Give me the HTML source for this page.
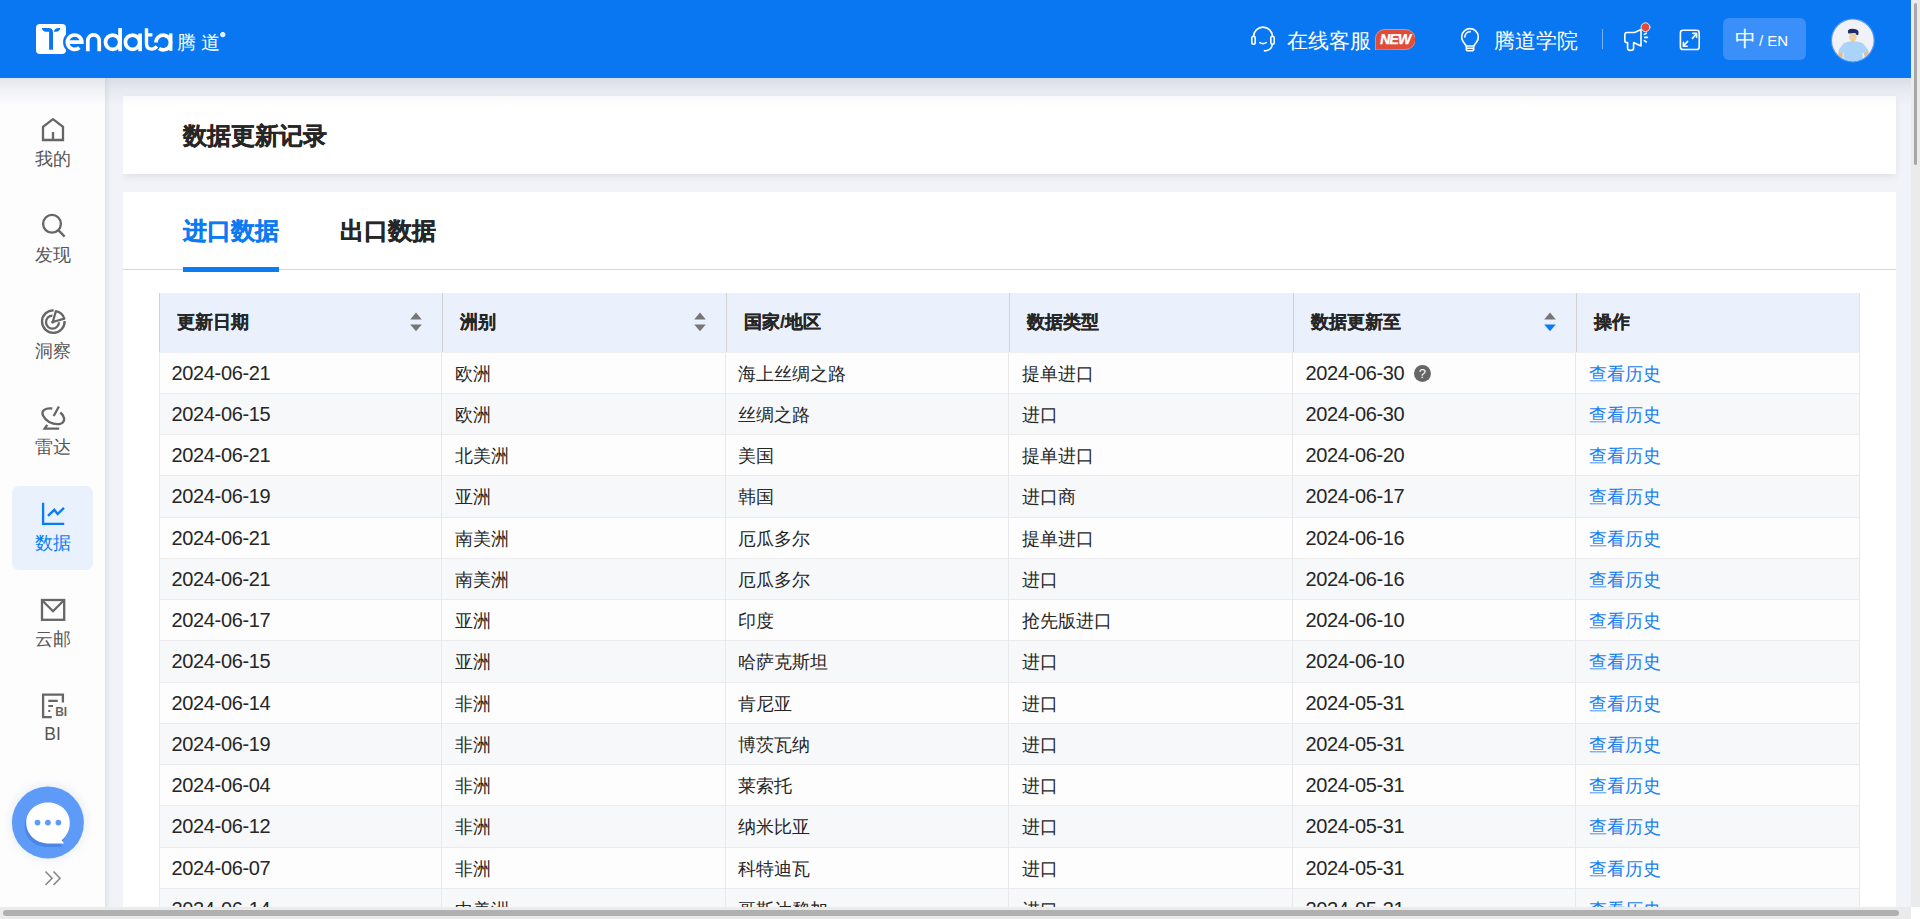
<!DOCTYPE html>
<html><head><meta charset="utf-8">
<style>
*{box-sizing:border-box;margin:0;padding:0}
html,body{width:1920px;height:919px;overflow:hidden;background:#f2f3f8;font-family:"Liberation Sans",sans-serif;color:#333}
.abs{position:absolute}
#hdr{position:absolute;left:0;top:0;width:1911px;height:78px;background:#0977f1;z-index:5}
#hshadow{position:absolute;left:0;top:78px;width:1911px;height:28px;background:linear-gradient(rgba(160,170,190,0.30),rgba(160,170,190,0.14) 40%,rgba(160,170,190,0));z-index:4}
#side{position:absolute;left:0;top:78px;width:105px;height:829px;background:#fdfdfe;z-index:2}
#sshadow{position:absolute;left:105px;top:78px;width:18px;height:829px;background:linear-gradient(90deg,#dfe2ea 0,#e9ebf1 2.5px,#eff1f6 5px,#f2f3f8 9px,#f2f3f8);z-index:1}
.nlab{position:absolute;left:0;width:105px;text-align:center;color:#555;font-size:17.5px;line-height:24px}
.nav{position:absolute;left:0;width:105px;text-align:center;color:#555;font-size:18px}
.nav svg{position:absolute}
.nav span{position:absolute;left:0;width:105px;text-align:center;line-height:20px}
#card1{position:absolute;left:123px;top:96px;width:1773px;height:78px;background:#fff;box-shadow:0 3px 7px rgba(30,40,80,0.08)}
#card2{position:absolute;left:123px;top:192px;width:1773px;height:760px;background:#fff}
.title{position:absolute;left:60px;top:22px;font-size:24px;font-weight:bold;color:#262626;line-height:36px;-webkit-text-stroke:0.3px #262626}
.tab{position:absolute;top:24px;font-size:24px;font-weight:bold;line-height:30px;color:#262626;-webkit-text-stroke:0.3px currentColor}
#tabline{position:absolute;left:0;top:77px;width:1773px;height:1px;background:#d9d9d9}
#tabul{position:absolute;left:60px;top:75px;width:96px;height:5px;background:#0a7bf2}
#tbl{position:absolute;left:0;top:0;width:0;height:0}
.th{position:absolute;top:293px;left:159px;width:1701px;height:59px;background:#eaf1fd}
.thl{position:absolute;top:352px;left:159px;width:1701px;height:1px;background:#eeeff2}
.hc{position:absolute;top:293px;height:59px;line-height:59px;font-size:18px;font-weight:bold;color:#262626;white-space:nowrap;-webkit-text-stroke:0.2px #262626}
.hs{position:absolute;top:293px;width:1.3px;height:59px;background:#d2d2d4}
.bs{position:absolute;width:1px;background:#e9e9eb}
.rw{position:absolute;left:159px;width:1701px}
.rb{position:absolute;left:159px;width:1701px;height:1px;background:#ebebed}
.c{position:absolute;font-size:18px;color:#262626;white-space:nowrap}
.c.d{font-size:20px;letter-spacing:-0.35px;margin-top:-1px;margin-left:0.5px}
.c a{color:#1a7ff0;text-decoration:none}
.sort{position:absolute;top:312px;width:12px;height:20px}
.q{position:absolute;left:1413.5px;width:17.5px;height:17.5px;border-radius:50%;background:#666;color:#fff;font-size:13px;line-height:17.5px;text-align:center;letter-spacing:0}
#vscroll{position:absolute;left:1911px;top:0;width:9px;height:907px;background:#ebebeb;z-index:9}
#vthumb{position:absolute;left:3px;top:3px;width:3px;height:162px;background:#a8a8a8;border-radius:2px}
#hscroll{position:absolute;left:0;top:907px;width:1911px;height:12px;background:#ebebeb;z-index:9}
#hthumb{position:absolute;left:3px;top:3px;width:1896px;height:6px;background:#b0b0b0;border-radius:3px}
#corner{position:absolute;left:1911px;top:907px;width:9px;height:12px;background:#fff;z-index:9}
</style></head><body>
<div id="hdr">
<svg class="abs" style="left:0;top:0" width="240" height="78" viewBox="0 0 240 78">
 <rect x="36" y="24" width="30" height="30" rx="4" fill="#fff"/>
 <path d="M41.9 28.1 H48.5 Q53 28.1 53 32.5 V49.8 H49.1 V31.8 H46 Q42.4 31.8 41.9 28.1 Z M53.9 31.8 Q54.5 28.1 58.5 28.1 H60.3 Q59.8 31.8 56 31.8 Z" fill="#0977f1"/>
 <g fill="none" stroke="#0977f1" stroke-width="3"><circle cx="74.6" cy="42.2" r="10"/></g>
 <g fill="none" stroke="#fff" stroke-width="3.7">
  <path d="M67.5 42.2 H81.8 A7.2 7.2 0 1 0 79.4 47.6"/>
  <path d="M87.8 51.2 V40.5 A5.7 5.7 0 0 1 99.2 40.5 V51.2"/>
  <circle cx="112.6" cy="42.2" r="7.1"/>
  <path d="M120.1 28 V51.2"/>
  <circle cx="132.5" cy="42.2" r="7.1"/>
  <path d="M140.1 33.5 V51.2"/>
  <path d="M146.5 28.2 V43.5 C146.5 47.8 148.8 49.1 151.8 49.1 C154 49.1 155.6 48 156.9 46.4" stroke-width="3.4"/>
  <path d="M146.5 34.85 H152.4" stroke-width="3.3"/>
  <path d="M155.9 42.5 A7.3 7.3 0 1 1 159 48.5"/>
  <path d="M170.8 33.4 V50.8" stroke-width="3.3"/>
 </g>
 <text x="177" y="49.3" font-size="19" fill="#fff" font-weight="300" letter-spacing="5">腾道</text>
 <circle cx="222.8" cy="34.6" r="2.2" fill="#dfeafc" stroke="#fff" stroke-width="1"/>
</svg>
<svg class="abs" style="left:1240px;top:0" width="40" height="78" viewBox="1240 0 40 78" fill="none" stroke="#fff" stroke-width="1.6" stroke-linecap="round">
 <path d="M1253.6 36.5 A9.4 9.4 0 0 1 1272.4 36.5"/>
 <rect x="1251.8" y="36.2" width="3.4" height="8" rx="1.7"/>
 <rect x="1270.8" y="36.2" width="3.4" height="8" rx="1.7"/>
 <path d="M1259.8 42.6 Q1263 44.6 1266.2 42.6"/>
 <path d="M1272.3 44.6 Q1271.5 50.6 1264.5 50.9"/>
</svg>
<div class="abs" style="left:1286.5px;top:25px;font-size:21px;line-height:32px;color:#fff">在线客服</div>
<svg class="abs" style="left:1375px;top:29px" width="40" height="21" viewBox="0 0 40 21">
 <path d="M0.5 21 V9 A9 9 0 0 1 9.5 0.5 H30.5 A9.5 9.5 0 0 1 30.5 20.5 Z" fill="#e04b3a" stroke="#f7b7a8" stroke-width="0.6"/>
 <text x="0" y="0" transform="translate(19.6 15.3) skewX(-9)" text-anchor="middle" font-size="14.2" font-weight="bold" fill="#fff" stroke="#fff" stroke-width="0.3" letter-spacing="-1" font-family="Liberation Sans">NEW</text>
</svg>
<svg class="abs" style="left:1450px;top:0" width="40" height="78" viewBox="1450 0 40 78" fill="none" stroke="#fff" stroke-width="1.6" stroke-linecap="round" stroke-linejoin="round">
 <path d="M1466.3 46 L1463.4 42 A8.3 8.3 0 1 1 1476.6 42 L1473.7 46 Z"/>
 <path d="M1466.3 46 V49 Q1466.3 50.8 1468 50.8 H1472 Q1473.7 50.8 1473.7 49 V46 M1466.3 48.2 H1473.7"/>
 <path d="M1464.8 37 A5.6 5.6 0 0 1 1470.3 31.6"/>
</svg>
<div class="abs" style="left:1493.5px;top:25px;font-size:21px;line-height:32px;color:#fff">腾道学院</div>
<div class="abs" style="left:1601.5px;top:29px;width:1.2px;height:20px;background:rgba(255,255,255,0.45)"></div>
<svg class="abs" style="left:1615px;top:0" width="100" height="78" viewBox="1615 0 100 78" fill="none" stroke="#fff" stroke-width="1.6" stroke-linejoin="round" stroke-linecap="round">
 <path d="M1627 32.5 H1634.5 L1641 29.6 V46 L1633.6 42.6 V48.3 Q1633.6 50.4 1630.5 50.4 Q1627.6 50.4 1627.6 48.3 V42.6 H1627 Q1624.8 42.6 1624.8 40.2 V35 Q1624.8 32.5 1627 32.5 Z"/>
 <path d="M1644.3 34.4 L1646.3 33.2 M1644.7 37.4 H1647.4 M1644.3 40.6 L1646.3 42"/>
 <circle cx="1645.5" cy="27.2" r="4.4" fill="#e04b3a" stroke="#f3f6fb" stroke-width="0.9"/>
 <rect x="1680.4" y="30.3" width="18.8" height="19.2" rx="2.6"/>
 <path d="M1692.4 38.4 L1696.4 34 M1692.9 33.4 H1696.6 V37.2"/>
 <path d="M1687.6 41.4 L1683.6 45.8 M1683.4 42.4 V46.2 H1687.2"/>
</svg>
<div class="abs" style="left:1723px;top:18px;width:83px;height:42px;border-radius:6px;background:#3a8ff8"></div>
<div class="abs" style="left:1735px;top:24px;font-size:21px;line-height:30px;color:#fff">中</div>
<div class="abs" style="left:1759px;top:26px;font-size:15px;line-height:30px;color:#fff">/ EN</div>
<svg class="abs" style="left:1830px;top:18px" width="46" height="46" viewBox="0 0 46 46">
 <defs><clipPath id="av"><circle cx="22.8" cy="22.4" r="20.8"/></clipPath></defs>
 <circle cx="22.8" cy="22.4" r="22" fill="#4d98f7"/>
 <circle cx="22.8" cy="22.4" r="20.8" fill="#f1f2f7"/>
 <g clip-path="url(#av)">
  <path d="M8.6 33 L12.8 35.2 L12.4 41 L8 40 Z" fill="#e3bf8f"/>
  <path d="M38.2 32.2 L33.8 35 L34.8 40.5 L39.5 39 Z" fill="#e3bf8f"/>
  <path d="M23 23.3 Q16.5 23.3 13.2 25.8 L8.4 32.6 L12.6 35.2 L13.6 34.2 V48 H32.6 V34.2 L33.6 35.2 L38.3 32.2 L33.4 25.8 Q30 23.3 23 23.3 Z" fill="#a9d3f9"/>
  <path d="M21 20.5 V23.6 Q22.8 25.6 24.6 23.6 V20.5Z" fill="#e6c290"/>
  <ellipse cx="22.8" cy="18.8" rx="3.7" ry="4.4" fill="#f0cfa0"/>
  <path d="M18.4 15.6 Q16.8 12 20 11 Q23.5 10.2 26.5 11.6 Q29.3 12.8 28.3 16.4 Q27.5 17.6 26.6 17 Q26.2 15.2 24.8 15 Q22.5 14.6 18.4 15.6Z" fill="#1d2b6b"/>
 </g>
</svg>
</div>
<div id="hshadow"></div>
<div id="side">
<svg class="abs" style="left:0;top:-78px" width="105" height="919" viewBox="0 0 105 919" fill="none" stroke="#666" stroke-width="2.3">
 <path d="M43 140 V126.8 L53 119.2 L63 126.8 V140 Z M53 132 V140" stroke-linejoin="miter"/>
 <circle cx="52" cy="223.8" r="8.9"/>
 <path d="M58.6 230.4 L64.6 236.6"/>
 <path d="M53.7 310.3 A11.3 11.3 0 1 0 64.6 321"/>
 <path d="M52.4 315.6 A6.5 6.5 0 1 0 59 322.2"/>
 <path d="M52.8 322 L55.8 311.2 A11 11 0 0 1 64.3 318.6 Z" stroke-linejoin="round"/>
 <circle cx="52.8" cy="322" r="1.6" fill="#666" stroke="none"/>
 <path d="M52.3 408.5 C45 407.5 41 411 43 415.5 C45.5 421 52 424.2 57.5 424.2 C63 424.2 65.5 420.5 63.4 416.5 C62.8 415 61.8 413.7 60.3 412.5"/>
 <path d="M53.7 416 L58.9 406.5"/>
 <path d="M47.2 424.8 L44.6 428.7 H59.2"/>
 <path d="M43.1 502.8 V523.8 H64.2" stroke="#0a7bf7"/>
 <path d="M48 515.9 L54.3 509.8 L57.6 514 L64 507.8" stroke="#0a7bf7"/>
 <rect x="42" y="600" width="22.2" height="19.8"/>
 <path d="M42.8 601 L53 611.2 L63.2 601"/>
 <path d="M51.7 717.1 H43.1 V694.7 H62.9 V702.5"/>
 <path d="M48.3 700.9 H57.8 M48.3 706 H53 M48.3 711 H50.3" stroke-width="2.1"/>
</svg>
<div class="abs" style="left:55.3px;top:627px;font-size:12px;font-weight:bold;color:#666;line-height:14px;letter-spacing:-0.3px">BI</div>
<div class="abs" style="left:12px;top:407.5px;width:81px;height:84.5px;border-radius:7px;background:#e9f1fd;z-index:-1"></div>
<div class="nlab" style="top:69px">我的</div>
<div class="nlab" style="top:165px">发现</div>
<div class="nlab" style="top:261px">洞察</div>
<div class="nlab" style="top:357px">雷达</div>
<div class="nlab" style="top:453px;color:#0a7bf7">数据</div>
<div class="nlab" style="top:549px">云邮</div>
<div class="nlab" style="top:644px">BI</div>
<div class="abs" style="left:8px;top:704px;width:80px;height:80px;border-radius:40px;background:rgba(200,210,225,0.25);filter:blur(3px)"></div>
<svg class="abs" style="left:0;top:700px" width="105" height="129" viewBox="0 778 105 129">
 <circle cx="47.9" cy="822.6" r="36" fill="#5e9bf8"/>
 <path d="M46.5 805.9 C35 805.9 24.7 814 24.7 826.1 C24.7 837.5 34 846.9 46 846.9 H62.7 L60.2 843.8 C65.5 839.5 68.3 833.3 68.3 826.1 C68.3 814 58 805.9 46.5 805.9Z" fill="#4a86e6"/>
 <path d="M48 802.4 C36.5 802.4 26.2 810.5 26.2 822.6 C26.2 834 35.5 843.4 47.5 843.4 H64.2 L61.7 840.3 C67 836 69.8 829.8 69.8 822.6 C69.8 810.5 59.5 802.4 48 802.4Z" fill="#fff"/>
 <circle cx="37.5" cy="822.6" r="2.9" fill="#5e9bf8"/>
 <circle cx="47.9" cy="822.6" r="2.9" fill="#5e9bf8"/>
 <circle cx="58.4" cy="822.6" r="2.9" fill="#5e9bf8"/>
 <path d="M45.5 871.5 L52 878.2 L45.5 885 M53.5 871.5 L60 878.2 L53.5 885" fill="none" stroke="#888" stroke-width="1.6"/>
</svg>
</div>
<div id="sshadow"></div>
<div id="card1"><div class="title">数据更新记录</div></div>
<div id="card2">
  <div class="tab" style="left:60px;color:#0a7bf2">进口数据</div>
  <div class="tab" style="left:217px">出口数据</div>
  <div id="tabline"></div>
  <div id="tabul"></div>

</div>
<div id="tbl">
<div class="th"></div><div class="thl"></div>
<div class="rw" style="top:353px;height:40px;background:#fdfdfe"></div><div class="rb" style="top:393px"></div>
<div class="rw" style="top:394px;height:40px;background:#f7f8fa"></div><div class="rb" style="top:434px"></div>
<div class="rw" style="top:435px;height:40px;background:#fdfdfe"></div><div class="rb" style="top:475px"></div>
<div class="rw" style="top:476px;height:41px;background:#f7f8fa"></div><div class="rb" style="top:517px"></div>
<div class="rw" style="top:518px;height:40px;background:#fdfdfe"></div><div class="rb" style="top:558px"></div>
<div class="rw" style="top:559px;height:40px;background:#f7f8fa"></div><div class="rb" style="top:599px"></div>
<div class="rw" style="top:600px;height:40px;background:#fdfdfe"></div><div class="rb" style="top:640px"></div>
<div class="rw" style="top:641px;height:41px;background:#f7f8fa"></div><div class="rb" style="top:682px"></div>
<div class="rw" style="top:683px;height:40px;background:#fdfdfe"></div><div class="rb" style="top:723px"></div>
<div class="rw" style="top:724px;height:40px;background:#f7f8fa"></div><div class="rb" style="top:764px"></div>
<div class="rw" style="top:765px;height:40px;background:#fdfdfe"></div><div class="rb" style="top:805px"></div>
<div class="rw" style="top:806px;height:41px;background:#f7f8fa"></div><div class="rb" style="top:847px"></div>
<div class="rw" style="top:848px;height:40px;background:#fdfdfe"></div><div class="rb" style="top:888px"></div>
<div class="rw" style="top:889px;height:40px;background:#f7f8fa"></div><div class="rb" style="top:929px"></div>
<div class="bs" style="left:441px;top:353px;height:560px"></div><div class="bs" style="left:725px;top:353px;height:560px"></div><div class="bs" style="left:1008px;top:353px;height:560px"></div><div class="bs" style="left:1292px;top:353px;height:560px"></div><div class="bs" style="left:1575px;top:353px;height:560px"></div><div class="bs" style="left:1859px;top:353px;height:560px"></div><div class="bs" style="left:159px;top:353px;height:560px"></div>
<div class="hs" style="left:158.7px"></div><div class="hs" style="left:441.7px"></div><div class="hs" style="left:725.7px"></div><div class="hs" style="left:1008.7px"></div><div class="hs" style="left:1292.7px"></div><div class="hs" style="left:1575.7px"></div><div class="hs" style="left:1858.8px;width:1.2px;background:#dfe3ea"></div>
<div class="hc" style="left:177px">更新日期</div><div class="hc" style="left:460px">洲别</div><div class="hc" style="left:744px">国家/地区</div><div class="hc" style="left:1027px">数据类型</div><div class="hc" style="left:1311px">数据更新至</div><div class="hc" style="left:1594px">操作</div>
<svg class="sort" style="left:410.3px" viewBox="0 0 12 20"><path d="M6 0.6L11.8 7.4H0.2Z" fill="#767676"/><path d="M0.2 12.4H11.8L6 19.2Z" fill="#767676"/></svg><svg class="sort" style="left:694.3px" viewBox="0 0 12 20"><path d="M6 0.6L11.8 7.4H0.2Z" fill="#767676"/><path d="M0.2 12.4H11.8L6 19.2Z" fill="#767676"/></svg><svg class="sort" style="left:1544.3px" viewBox="0 0 12 20"><path d="M6 0.6L11.8 7.4H0.2Z" fill="#767676"/><path d="M0.2 12.4H11.8L6 19.2Z" fill="#0a7bf2"/></svg>
<div class="c d" style="left:171px;top:354px;line-height:40px">2024-06-21</div><div class="c" style="left:454.5px;top:354px;line-height:40px">欧洲</div><div class="c" style="left:738px;top:354px;line-height:40px">海上丝绸之路</div><div class="c" style="left:1021.5px;top:354px;line-height:40px">提单进口</div><div class="c d" style="left:1305px;top:354px;line-height:40px">2024-06-30</div><div class="c" style="left:0;top:353px;height:40px;line-height:40px"><span class="q" style="top:11.75px">?</span></div><div class="c" style="left:1588.5px;top:354px;line-height:40px"><a>查看历史</a></div>
<div class="c d" style="left:171px;top:395px;line-height:40px">2024-06-15</div><div class="c" style="left:454.5px;top:395px;line-height:40px">欧洲</div><div class="c" style="left:738px;top:395px;line-height:40px">丝绸之路</div><div class="c" style="left:1021.5px;top:395px;line-height:40px">进口</div><div class="c d" style="left:1305px;top:395px;line-height:40px">2024-06-30</div><div class="c" style="left:1588.5px;top:395px;line-height:40px"><a>查看历史</a></div>
<div class="c d" style="left:171px;top:436px;line-height:40px">2024-06-21</div><div class="c" style="left:454.5px;top:436px;line-height:40px">北美洲</div><div class="c" style="left:738px;top:436px;line-height:40px">美国</div><div class="c" style="left:1021.5px;top:436px;line-height:40px">提单进口</div><div class="c d" style="left:1305px;top:436px;line-height:40px">2024-06-20</div><div class="c" style="left:1588.5px;top:436px;line-height:40px"><a>查看历史</a></div>
<div class="c d" style="left:171px;top:477px;line-height:41px">2024-06-19</div><div class="c" style="left:454.5px;top:477px;line-height:41px">亚洲</div><div class="c" style="left:738px;top:477px;line-height:41px">韩国</div><div class="c" style="left:1021.5px;top:477px;line-height:41px">进口商</div><div class="c d" style="left:1305px;top:477px;line-height:41px">2024-06-17</div><div class="c" style="left:1588.5px;top:477px;line-height:41px"><a>查看历史</a></div>
<div class="c d" style="left:171px;top:519px;line-height:40px">2024-06-21</div><div class="c" style="left:454.5px;top:519px;line-height:40px">南美洲</div><div class="c" style="left:738px;top:519px;line-height:40px">厄瓜多尔</div><div class="c" style="left:1021.5px;top:519px;line-height:40px">提单进口</div><div class="c d" style="left:1305px;top:519px;line-height:40px">2024-06-16</div><div class="c" style="left:1588.5px;top:519px;line-height:40px"><a>查看历史</a></div>
<div class="c d" style="left:171px;top:560px;line-height:40px">2024-06-21</div><div class="c" style="left:454.5px;top:560px;line-height:40px">南美洲</div><div class="c" style="left:738px;top:560px;line-height:40px">厄瓜多尔</div><div class="c" style="left:1021.5px;top:560px;line-height:40px">进口</div><div class="c d" style="left:1305px;top:560px;line-height:40px">2024-06-16</div><div class="c" style="left:1588.5px;top:560px;line-height:40px"><a>查看历史</a></div>
<div class="c d" style="left:171px;top:601px;line-height:40px">2024-06-17</div><div class="c" style="left:454.5px;top:601px;line-height:40px">亚洲</div><div class="c" style="left:738px;top:601px;line-height:40px">印度</div><div class="c" style="left:1021.5px;top:601px;line-height:40px">抢先版进口</div><div class="c d" style="left:1305px;top:601px;line-height:40px">2024-06-10</div><div class="c" style="left:1588.5px;top:601px;line-height:40px"><a>查看历史</a></div>
<div class="c d" style="left:171px;top:642px;line-height:41px">2024-06-15</div><div class="c" style="left:454.5px;top:642px;line-height:41px">亚洲</div><div class="c" style="left:738px;top:642px;line-height:41px">哈萨克斯坦</div><div class="c" style="left:1021.5px;top:642px;line-height:41px">进口</div><div class="c d" style="left:1305px;top:642px;line-height:41px">2024-06-10</div><div class="c" style="left:1588.5px;top:642px;line-height:41px"><a>查看历史</a></div>
<div class="c d" style="left:171px;top:684px;line-height:40px">2024-06-14</div><div class="c" style="left:454.5px;top:684px;line-height:40px">非洲</div><div class="c" style="left:738px;top:684px;line-height:40px">肯尼亚</div><div class="c" style="left:1021.5px;top:684px;line-height:40px">进口</div><div class="c d" style="left:1305px;top:684px;line-height:40px">2024-05-31</div><div class="c" style="left:1588.5px;top:684px;line-height:40px"><a>查看历史</a></div>
<div class="c d" style="left:171px;top:725px;line-height:40px">2024-06-19</div><div class="c" style="left:454.5px;top:725px;line-height:40px">非洲</div><div class="c" style="left:738px;top:725px;line-height:40px">博茨瓦纳</div><div class="c" style="left:1021.5px;top:725px;line-height:40px">进口</div><div class="c d" style="left:1305px;top:725px;line-height:40px">2024-05-31</div><div class="c" style="left:1588.5px;top:725px;line-height:40px"><a>查看历史</a></div>
<div class="c d" style="left:171px;top:766px;line-height:40px">2024-06-04</div><div class="c" style="left:454.5px;top:766px;line-height:40px">非洲</div><div class="c" style="left:738px;top:766px;line-height:40px">莱索托</div><div class="c" style="left:1021.5px;top:766px;line-height:40px">进口</div><div class="c d" style="left:1305px;top:766px;line-height:40px">2024-05-31</div><div class="c" style="left:1588.5px;top:766px;line-height:40px"><a>查看历史</a></div>
<div class="c d" style="left:171px;top:807px;line-height:41px">2024-06-12</div><div class="c" style="left:454.5px;top:807px;line-height:41px">非洲</div><div class="c" style="left:738px;top:807px;line-height:41px">纳米比亚</div><div class="c" style="left:1021.5px;top:807px;line-height:41px">进口</div><div class="c d" style="left:1305px;top:807px;line-height:41px">2024-05-31</div><div class="c" style="left:1588.5px;top:807px;line-height:41px"><a>查看历史</a></div>
<div class="c d" style="left:171px;top:849px;line-height:40px">2024-06-07</div><div class="c" style="left:454.5px;top:849px;line-height:40px">非洲</div><div class="c" style="left:738px;top:849px;line-height:40px">科特迪瓦</div><div class="c" style="left:1021.5px;top:849px;line-height:40px">进口</div><div class="c d" style="left:1305px;top:849px;line-height:40px">2024-05-31</div><div class="c" style="left:1588.5px;top:849px;line-height:40px"><a>查看历史</a></div>
<div class="c d" style="left:171px;top:890px;line-height:40px">2024-06-14</div><div class="c" style="left:454.5px;top:890px;line-height:40px">中美洲</div><div class="c" style="left:738px;top:890px;line-height:40px">哥斯达黎加</div><div class="c" style="left:1021.5px;top:890px;line-height:40px">进口</div><div class="c d" style="left:1305px;top:890px;line-height:40px">2024-05-31</div><div class="c" style="left:1588.5px;top:890px;line-height:40px"><a>查看历史</a></div>
</div>
<div id="vscroll"><div id="vthumb"></div></div>
<div id="hscroll"><div id="hthumb"></div></div>
<div id="corner"></div>
</body></html>
